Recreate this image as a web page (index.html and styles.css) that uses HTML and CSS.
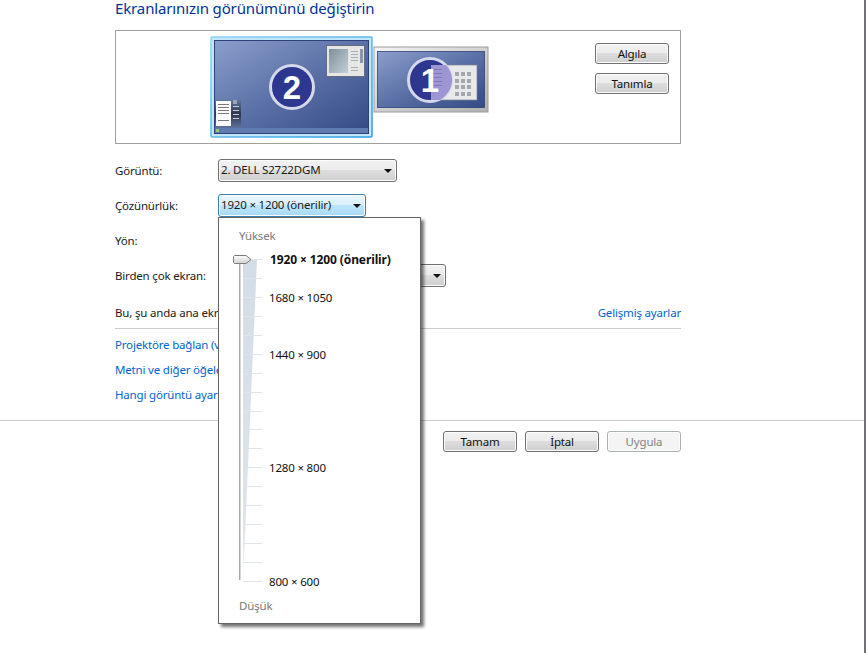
FILE: index.html
```html
<!DOCTYPE html>
<html lang="tr">
<head>
<meta charset="utf-8">
<title>Ekran çözünürlüğü</title>
<link rel="stylesheet" href="styles.css">
</head>
<body>
<main class="content">
  <h1 class="title">Ekranlarınızın görünümünü değiştirin</h1>
  <section class="preview">
    <div class="canvas">
      <svg class="mon-svg" width="282" height="108" viewBox="0 0 282 108" aria-hidden="true">
        <defs>
          <linearGradient id="scr" x1="0" y1="0" x2="1" y2="1">
            <stop offset="0" stop-color="#8a9fcc"/><stop offset=".5" stop-color="#5b70a6"/><stop offset="1" stop-color="#344a85"/>
          </linearGradient>
          <linearGradient id="win" x1="0" y1="0" x2="1" y2="1">
            <stop offset="0" stop-color="#7f8f9b"/><stop offset="1" stop-color="#c4d0d6"/>
          </linearGradient>
          <linearGradient id="frame1" x1="0" y1="0" x2="1" y2="1">
            <stop offset="0" stop-color="#f4f4f4"/><stop offset="1" stop-color="#b0b0b0"/>
          </linearGradient>
          <linearGradient id="frame2" x1="0" y1="0" x2="1" y2="1">
            <stop offset="0" stop-color="#8fd2f6"/><stop offset="1" stop-color="#2f9be0"/>
          </linearGradient>
          <linearGradient id="side" x1="0" y1="0" x2="0" y2="1">
            <stop offset="0" stop-color="#5f7499"/><stop offset=".5" stop-color="#262a3e"/><stop offset="1" stop-color="#5f7499"/>
          </linearGradient>
        </defs>
        <!-- monitor 1 -->
        <rect x="164" y="11" width="114" height="65" fill="url(#frame1)" stroke="#9c9c9c"/>
        <rect x="167.500" y="15.500" width="107" height="56" fill="url(#scr)" stroke="#2e4178" stroke-width=".8"/>
        <rect x="221" y="29" width="46" height="35" fill="#e8eaea" stroke="#7d8496" stroke-width=".7"/>
        <g fill="#a2a8ae">
          <rect x="245" y="36" width="4" height="4"/><rect x="251" y="36" width="4" height="4"/><rect x="257" y="36" width="4" height="4"/>
          <rect x="245" y="43" width="4" height="4"/><rect x="251" y="43" width="4" height="4"/><rect x="257" y="43" width="4" height="4"/>
          <rect x="245" y="49" width="4" height="4"/><rect x="251" y="49" width="4" height="4"/><rect x="257" y="49" width="4" height="4"/>
          <rect x="245" y="56" width="4" height="4"/><rect x="251" y="56" width="4" height="4"/><rect x="257" y="56" width="4" height="4"/>
        </g>
        <circle cx="220" cy="44" r="21.500" fill="#2d3790" stroke="#d6d9ec" stroke-width="3"/>
        <path d="M221 29h15a21.500 21.500 0 0 1 0 30a21.500 21.500 0 0 1-6 5h-9z" fill="#9d96d2"/>
        <g fill="#8079b8"><rect x="223" y="33" width="9" height="1"/><rect x="223" y="37" width="9" height="1"/><rect x="223" y="41" width="9" height="1"/><rect x="223" y="45" width="9" height="1"/><rect x="223" y="49" width="9" height="1"/></g>
        <text x="220" y="56" class="badge-num" text-anchor="middle">1</text>
        <!-- monitor 2 -->
        <rect x="1" y="1" width="161" height="100" rx="1" fill="#c2e6fa" stroke="url(#frame2)" stroke-width="1.500"/>
        <rect x="4.500" y="4.500" width="154" height="93" fill="url(#scr)" stroke="#2e4178"/>
        <rect x="5" y="92" width="153" height="5" fill="#5f7cb0"/>
        <rect x="6" y="93" width="3" height="3" fill="#a4c46c"/>
        <rect x="5" y="64" width="26" height="28" fill="url(#side)" opacity=".85"/>
        <rect x="6" y="65" width="15" height="25" fill="#fafafa"/>
        <g fill="#7a7a7a"><rect x="8" y="68" width="11" height="1"/><rect x="8" y="71" width="11" height="1"/><rect x="8" y="74" width="11" height="1"/><rect x="8" y="77" width="11" height="1"/><rect x="8" y="84" width="11" height="1"/></g>
        <g fill="#c8ccd4"><rect x="23" y="70" width="6" height="1"/><rect x="23" y="74" width="6" height="1"/><rect x="23" y="78" width="6" height="1"/><rect x="23" y="82" width="6" height="1"/></g>
        <rect x="23" y="64" width="4" height="4" fill="#9aa6bc"/>
        <rect x="116.500" y="9.500" width="38" height="31" fill="#e6e7e5" stroke="#5f6577" stroke-width=".9"/>
        <rect x="119" y="13" width="19" height="24" fill="url(#win)"/>
        <g fill="#a9adb0"><rect x="141" y="15" width="7" height="1"/><rect x="141" y="18" width="7" height="1"/><rect x="141" y="21" width="7" height="1"/><rect x="141" y="24" width="7" height="1"/><rect x="141" y="31" width="7" height="1"/><rect x="141" y="34" width="7" height="1"/></g>
        <rect x="150" y="13" width="3" height="14" fill="#8896ae"/>
        <circle cx="82" cy="51" r="21.500" fill="#2d3790" stroke="#d6d9ec" stroke-width="3"/>
        <text x="82" y="63" class="badge-num" text-anchor="middle">2</text>
      </svg>
    </div>
    <div class="side-btns">
      <button class="btn" type="button">Algıla</button>
      <button class="btn" type="button">Tanımla</button>
    </div>
  </section>
  <div class="row row-first"><span class="lab">Görüntü:</span><span class="select select-display">2. DELL S2722DGM<i class="arrow"></i></span></div>
  <div class="row"><span class="lab">Çözünürlük:</span><span class="select select-res">1920 × 1200 (önerilir)<i class="arrow"></i></span></div>
  <div class="row"><span class="lab">Yön:</span></div>
  <div class="row"><span class="lab">Birden çok ekran:</span><span class="select select-multi"><i class="arrow"></i></span></div>
  <div class="row row-info"><span>Bu, şu anda ana ekranınız</span><a class="link" href="#">Gelişmiş ayarlar</a></div>
  <div class="links">
    <a class="link" href="#">Projektöre bağlan (veya</a>
    <a class="link" href="#">Metni ve diğer öğeleri</a>
    <a class="link" href="#">Hangi görüntü ayarları</a>
  </div>
</main>
<footer class="foot">
  <div class="foot-inner">
    <button class="btn" type="button">Tamam</button>
    <button class="btn" type="button">İptal</button>
    <button class="btn btn-off" type="button" disabled>Uygula</button>
  </div>
</footer>

<div class="popup">
  <div class="end-label end-top">Yüksek</div>
  <div class="slider">
    <div class="wedge"></div>
    <div class="rail"></div>
    <div class="ticks">
      <i></i><i></i><i></i><i></i><i></i><i></i><i></i><i></i><i></i><i></i><i></i><i></i><i></i><i></i><i></i><i></i><i></i><i></i>
    </div>
    <svg class="thumb" width="19" height="9" viewBox="0 0 19 9" aria-hidden="true">
      <defs>
        <linearGradient id="th" x1="0" y1="0" x2="0" y2="1">
          <stop offset="0" stop-color="#fcfcfc"/><stop offset="1" stop-color="#d2d2d2"/>
        </linearGradient>
      </defs>
      <path d="M1.500.5h11.500l5 4-5 4h-11.500l-1-1v-6z" fill="url(#th)" stroke="#7c7c7c"/>
    </svg>
    <span class="val val-a">1920 × 1200 (önerilir)</span>
    <span class="val val-b">1680 × 1050</span>
    <span class="val val-c">1440 × 900</span>
    <span class="val val-d">1280 × 800</span>
    <span class="val val-e">800 × 600</span>
  </div>
  <div class="end-label end-bot">Düşük</div>
</div>
</body>
</html>
```
FILE: styles.css
```css
* { box-sizing: border-box; }
html, body { margin: 0; height: 100%; }
body {
  position: relative;
  width: 866px;
  height: 653px;
  overflow: hidden;
  background: #fff;
  border-right: 2px solid #6d7278;
  color: #1a1a1a;
  font: 11.5px/16px "Noto Sans", "Open Sans", sans-serif;
  letter-spacing: -.18px;
}
.content { width: 681px; padding-left: 115px; }
.title {
  margin: 0;
  height: 30px;
  font-size: 15px;
  line-height: 16px;
  font-weight: 400;
  letter-spacing: -.13px;
  color: #003399;
}
.preview {
  display: flex;
  justify-content: space-between;
  height: 114px;
  border: 1px solid #a0a0a0;
  padding: 12px 11px 0 94px;
}
.canvas { position: relative; width: 282px; }
.mon-svg { display: block; margin-top: -7px; }
.badge-num { font: 700 33px "Liberation Sans", sans-serif; fill: #fff; letter-spacing: 0; }
.side-btns { display: flex; flex-direction: column; gap: 9px; }
.btn {
  display: block;
  width: 74px;
  height: 21px;
  padding: 0;
  border: 1px solid #707070;
  border-radius: 3px;
  background: linear-gradient(#f2f2f2 0, #ebebeb 48%, #dddddd 50%, #cfcfcf 100%);
  box-shadow: inset 0 0 0 1px #fcfcfc;
  color: #111;
  font: inherit;
  letter-spacing: inherit;
  line-height: 17px;
}
.btn-off {
  border-color: #adb2b5;
  background: #f4f4f4;
  color: #838383;
}
.row { display: flex; align-items: center; height: 23px; margin-top: 12px; }
.row-first { margin-top: 15px; }
.lab { width: 103px; }
.select {
  position: relative;
  display: block;
  height: 23px;
  padding-left: 2px;
  border: 1px solid #707070;
  border-radius: 3px;
  background: linear-gradient(#f2f2f2 0, #ebebeb 48%, #dddddd 50%, #cfcfcf 100%);
  box-shadow: inset 0 0 0 1px #fcfcfc;
  line-height: 20px;
}
.select-display { width: 179px; }
.select-res {
  width: 148px;
  border-color: #3c7fb1;
  background: linear-gradient(#eaf6fd 0, #d9f0fc 48%, #bee6fd 50%, #a7d9f5 100%);
}
.select-multi { width: 228px; }
.arrow {
  position: absolute;
  right: 4px;
  top: 9px;
  width: 0;
  height: 0;
  border: 4px solid transparent;
  border-top: 4px solid #111;
  border-bottom: 0;
}
.row-info { justify-content: space-between; margin-top: 18px; height: 16px; }
.link { color: #0066cc; text-decoration: none; }
.links {
  display: flex;
  flex-direction: column;
  gap: 9px;
  margin-top: 7px;
  padding-top: 8px;
  border-top: 1px solid #cccccc;
}
.foot {
  margin-top: 17px;
  padding-top: 10px;
  border-top: 1px solid #cccccc;
}
.foot-inner { display: flex; gap: 8px; justify-content: flex-end; width: 681px; }

.popup {
  position: absolute;
  left: 218px;
  top: 217px;
  width: 203px;
  height: 407px;
  background: #fff;
  border: 1px solid #646464;
  box-shadow: 3px 3px 3px rgba(0, 0, 0, .55);
}
.end-label { position: absolute; left: 20px; color: #7b7b7b; }
.end-top { top: 10px; }
.end-bot { top: 380px; }
.slider { position: absolute; left: 0; top: 34px; width: 100%; height: 335px; }
.wedge {
  position: absolute;
  left: 24px;
  top: 7px;
  width: 14px;
  height: 322px;
  background: linear-gradient(#d3dde6, #dde4eb 85%, #f2f5f7);
  clip-path: polygon(0 0, 100% 0, 0 100%);
}
.rail {
  position: absolute;
  left: 20px;
  top: 10px;
  width: 2px;
  height: 318px;
  background: #a9a9a9;
  border-right: 1px solid #d5d5d5;
}
.ticks {
  position: absolute;
  left: 24px;
  top: 7px;
  width: 19px;
  display: flex;
  flex-direction: column;
  gap: 17.940px;
}
.ticks i { display: block; height: 1px; background: #dfe4ea; }
.thumb {
  position: absolute;
  left: 14px;
  top: 3px;
}
.val { position: absolute; left: 50px; color: #111; white-space: nowrap; }
.val-a { left: 51px; top: 0; font-size: 12px; font-weight: 700; letter-spacing: -.11px; }
.val-b { top: 38px; }
.val-c { top: 95px; }
.val-d { top: 208px; }
.val-e { top: 322px; }
```
